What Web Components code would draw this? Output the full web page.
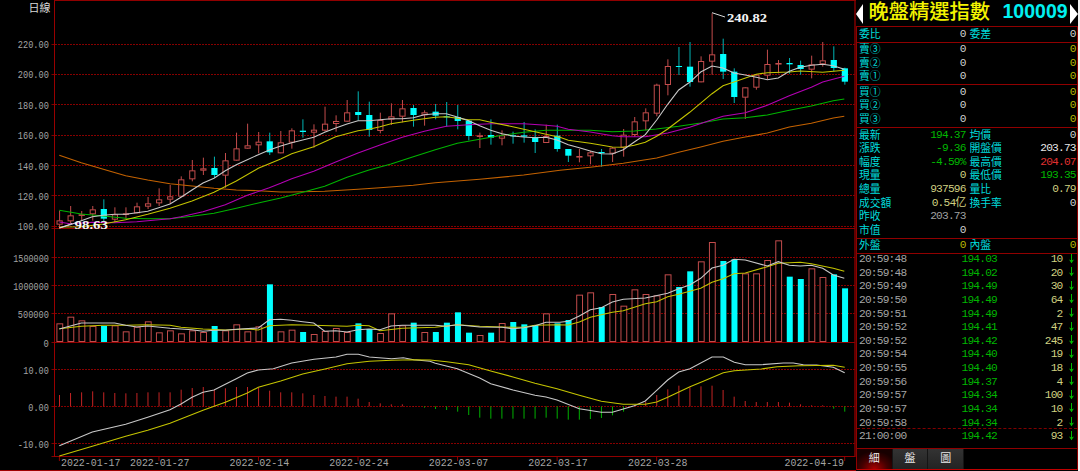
<!DOCTYPE html>
<html lang="zh-Hant">
<head>
<meta charset="utf-8">
<title>晚盤精選指數</title>
<style>
html,body{margin:0;background:#000;overflow:hidden}
body{width:1080px;height:471px}
</style>
</head>
<body>
<trade-screen></trade-screen>
<script>
const MONO = '"Liberation Mono","Noto Sans CJK TC",monospace';
const CJK = '"Liberation Sans","Noto Sans CJK TC",sans-serif';
// Series are stored in thirds of a pixel.
const X = i => 59.4 + 11.06 * i;
const RED = '#c24c4c', CYAN = '#00ffff';

const candles = [
[632,661,674,684,0],[618,646,664,670,0],[633,643,647,662,0],[618,628,643,662,0],[598,627,656,668,1],[622,643,659,667,0],[622,640,645,658,0],[608,619,640,640,0],[591,610,620,627,0],[565,598,610,618,0],[555,589,599,612,0],[529,538,590,590,0],[480,511,538,544,0],[473,505,512,525,0],[470,504,525,533,1],[459,481,527,563,0],[398,445,482,482,0],[371,436,446,446,0],[396,425,436,460,0],[398,424,457,465,1],[393,427,460,460,0],
[385,391,428,446,0],[358,392,396,413,1],[373,389,398,443,0],[320,371,392,395,0],[346,363,372,395,0],[300,337,365,365,0],[274,336,345,362,1],[305,345,390,410,1],[338,360,393,400,0],[310,349,359,375,0],[300,325,350,367,0],[315,324,345,380,1],[331,337,346,377,0],[312,335,347,358,1],[306,349,352,380,1],[315,351,363,388,1],[360,362,408,421,1],[398,406,411,444,0],[358,405,413,434,1],[391,406,416,436,0],[395,406,409,431,1],[366,406,410,428,1],[388,412,426,459,1],[374,408,429,429,0],[374,407,447,455,1],
[447,447,467,486,1],[447,468,471,487,0],[452,457,469,493,0],[447,456,460,500,1],[441,443,461,486,0],[387,404,443,470,0],[351,364,405,411,0],[325,337,364,391,0],[251,254,341,349,0],[178,198,255,286,0],[141,198,200,225,1],[126,200,246,260,1],[169,183,247,247,0],[40,163,185,224,0],[116,162,215,237,1],[205,215,291,309,1],[262,262,293,357,0],[222,224,263,269,0],[149,192,227,238,0],[180,189,192,220,0],[174,189,193,221,1],[182,195,207,224,1],[167,193,209,235,0],[126,181,193,200,0],[139,180,204,214,1],[203,205,245,254,1]];
const volumes = [295,275,286,303,303,301,319,305,289,322,316,325,316,321,303,316,298,319,304,178,319,314,321,327,318,309,321,295,312,324,265,301,293,321,321,293,262,323,330,323,294,291,298,300,265,295,285,209,202,246,207,242,193,207,211,148,186,139,109,51,108,103,145,145,105,46,155,162,130,156,148,190];
const histogram = [165,159,157,154,157,159,160,159,157,157,157,149,144,141,149,145,141,141,143,152,157,157,160,165,168,170,170,176,186,190,193,193,198,203,207,210,215,225,233,236,236,236,236,236,233,236,239,239,237,234,226,215,199,185,165,148,137,142,139,137,150,170,183,186,186,186,188,193,196,196,206,215];

// Joins runs of points, each run with its own origin.
const curve = (color, ...runs) => {
  const pts = runs.map(([dx, dy, s]) => s.split(' ').map(p => {
    const [x, y] = p.split(',').map(Number);
    return ((x + dx) / 3).toFixed(1) + ',' + ((y + dy) / 3).toFixed(1);
  }).join(' ')).join(' ');
  return `<polyline points="${pts}" fill="none" stroke="${color}" stroke-width="1.1"/>`;
};
const rule = (y, dashed) => `<line x1="55" x2="855" y1="${y}" y2="${y}" stroke="${dashed ? '#860000' : '#900000'}" stroke-width="1" ${dashed ? 'stroke-dasharray="2 1"' : ''} shape-rendering="crispEdges"/>` +
  `<line x1="51.5" x2="54" y1="${y}" y2="${y}" stroke="#800000"/>`;
const label = (t, y, w) => `<text x="${48.8 - w}" y="${y + 3.9}" textLength="${w}" lengthAdjust="spacingAndGlyphs">${t}</text>`;
const box = (x, top, bottom, filled, w) => filled
  ? `<rect x="${x - w / 2}" y="${top}" width="${w}" height="${Math.max(1, bottom - top)}" fill="${CYAN}"/>`
  : `<rect x="${x - w / 2 + .5}" y="${top + .5}" width="${w - 1}" height="${Math.max(.6, bottom - top - 1)}" fill="#000" stroke="${RED}"/>`;

class ChartPane extends HTMLElement {
  constructor() { super(); this.attachShadow({mode: 'open'}); }
  paint(top, height, body) {
    this.shadowRoot.innerHTML = `<style>
      :host{display:block;height:${height}px}
      svg{display:block;overflow:visible}
      text{font:11.8px ${MONO};fill:#a4a4a4}
      .peak{font:bold 12px "Liberation Serif",serif;fill:#f4f4f4}
      .name{font:11px ${CJK};fill:#d8d8d8}
    </style><svg width="856" height="${height}" viewBox="0 ${top} 856 ${height}">
      <path d="M54.5 ${top}V${top + height}" stroke="#980000"/><path d="M855 ${top}V${top + height}" stroke="#800000" stroke-width="1.5"/>${body}</svg>`;
  }
}

class PricePane extends ChartPane {
  connectedCallback() {
    const grid = [[220,44.3],[200,74],[180,104.6],[160,135.4],[140,165.7],[120,195.7],[100,226.3]];
    let s = '<path d="M54 .5H856" stroke="#900000"/><text class="name" x="28.5" y="11.5">日線</text>';
    for (const [v, y] of grid) s += rule(Math.floor(y) + .5, true) + label(v + '.00', y, 31);
    s += rule(228.5);
    candles.forEach(([h, t, b, l, c], i) => {
      const x = X(i) + .2;
      s += `<path d="M${x} ${h / 3}V${l / 3}" stroke="${c ? '#00b4b4' : '#c24c4c'}"/>` + box(x, t / 3, b / 3, c, 6.2);
    });
    s += curve('#c46200',[0,0,'178,466 244,488 310,508 377,527 443,540 510,551 576,558 642,565 709,570 775,572 842,576'],[840,180,'35,396 134,394 234,388 300,383 400,376 466,368 599,358 731,345'],[1680,0,'0,511 91,502 190,490 290,474 356,457 422,441 489,424 556,411 622,399 688,381 754,370 820,354 853,349']);
    s += curve('#00b400',[0,0,'178,631 244,642 310,648 377,655 443,656 510,656 576,649 642,640 709,625 775,609 842,594'],[840,180,'68,397 134,379 201,352 267,330 333,312 400,290 466,269 532,250 599,238 666,226 731,217 798,211 840,211'],[1680,0,'25,391 91,391 157,395 223,393 289,387 356,379 422,369 489,357 556,353 622,345 688,331 754,318 820,302 853,297']);
    s += curve('#b400b4',[0,0,'178,666 210,671 277,667 344,668 410,665 476,659 510,656 543,650 609,635 676,614 742,586 808,563 842,550'],[840,180,'35,356 101,334 167,306 234,279 300,255 367,232 433,214 499,199 566,194 632,191 731,191 798,196 831,199'],[1680,0,'25,388 91,396 157,407 190,410 256,410 323,399 389,382 456,359 489,349 556,338 622,316 688,287 754,262 788,246 853,229']);
    s += curve('#c4c400',[0,0,'178,681 244,680 310,672 377,659 443,643 510,625 576,603 642,577 709,543 775,505 842,477'],[840,180,'35,281 101,260 167,230 234,212 267,208 300,200 333,191 400,181 466,172 499,170 532,175 566,179 599,179 632,187 698,200 765,215 831,230'],[1680,0,'0,412 25,421 91,430 157,441 190,442 223,436 256,427 290,409 323,387 389,337 456,281 489,257 522,246 589,223 622,218 688,216 721,213 788,217 853,211']);
    s += curve('#c8c8c8',[0,0,'178,684 211,674 244,662 277,650 310,646 344,643 377,643 410,638 443,634 476,623 510,612 543,592 576,570 609,549 642,535 676,512 709,494 742,479 775,464 808,450 842,438'],[840,180,'35,248 68,240 101,232 134,217 167,204 201,192 234,182 267,182 300,179 333,176 367,176 400,173 433,164 466,161 499,161 532,171 566,182 599,197 632,211 666,221 698,228 731,231 765,233 798,232 831,240'],[1680,0,'25,434 58,443 91,453 124,461 157,462 190,449 223,426 256,404 290,360 323,313 356,270 389,247 422,216 456,198 489,204 522,219 556,225 589,232 622,239 655,234 688,214 721,202 754,196 788,193 820,197 853,208']);
    s += '<path d="M712 12.7L725 17M59.5 228L72 223.5" stroke="#d8d8d8"/><text class="peak" x="727" y="22" textLength="40" lengthAdjust="spacingAndGlyphs">240.82</text><text class="peak" x="74.5" y="229.3" textLength="33.5" lengthAdjust="spacingAndGlyphs">98.63</text>';
    this.paint(0, 229, s);
  }
}

class VolumePane extends ChartPane {
  connectedCallback() {
    let s = rule(257.5, true) + rule(285.5, true) + rule(313.5, true) + rule(342.5)
      + label('1500000', 258, 35.5) + label('1000000', 286, 35.5) + label('500000', 314, 31) + label('0', 343.2, 5.3);
    volumes.forEach((t, i) => { s += box(X(i) + .4, t / 3 + 225, 342, candles[i][4], candles[i][4] ? 6 : 6.8); });
    s += curve('#c4c400',[0,675,'178,311 244,304 310,301 377,301 443,299 510,301 543,307 609,312 676,315 742,312 775,315 808,302 842,301'],[840,675,'35,299 101,301 201,304 234,301 267,302 300,317 367,310 466,307 532,299 599,304 698,307 731,307 765,301 831,299'],[1680,675,'25,300 58,291 91,277 157,262 190,257 256,236 290,230 323,215 356,208 422,190 456,172 489,161 522,146 556,144 622,125 655,115 721,112 754,116 820,130 853,139']);
    s += curve('#c8c8c8',[0,675,'178,312 211,303 244,294 344,294 377,301 410,306 443,303 510,310 576,314 609,319 642,316 676,316 709,313 775,309 808,284 842,283'],[840,675,'35,286 68,290 101,294 134,319 167,317 201,321 234,314 267,312 300,314 333,303 367,301 466,301 499,304 532,299 599,306 666,307 698,311 731,308 765,302 798,292 831,292'],[1680,675,'0,292 25,289 58,273 91,254 124,248 157,231 190,223 256,219 323,205 356,191 389,180 422,160 456,129 489,121 522,103 556,105 622,123 655,110 688,121 721,123 754,121 788,130 820,150 853,160']);
    this.paint(229, 114, s);
  }
}

class MacdPane extends ChartPane {
  connectedCallback() {
    let s = rule(369.5, true) + rule(406.5, true) + rule(443.5, true) + rule(456.5)
      + label('10.00', 369.7, 25.5) + label('0.00', 407, 20.5) + label('-10.00', 443.9, 31);
    histogram.forEach((v, i) => { s += `<path d="M${X(i) + .1} 406.4V${v / 3 + 340}" stroke="${v > 199 ? '#00b000' : '#c42424'}"/>`; });
    s += curve('#c8c8c8',[0,1020,'178,317 277,276 377,253 443,232 510,209 543,192 576,172 609,157 642,150 676,133 709,116 742,99 775,90 820,86 875,69 942,58 1008,51 1041,43 1075,43 1108,51 1175,56 1210,53 1241,59 1290,64'],[1290,1020,'16,70 82,86 149,114 182,131 249,150 315,166 348,171 381,180 448,206 514,217 547,217 613,197 646,183 680,151 713,120 746,96 780,86 846,51 880,51 913,67 946,74 994,74 1060,69 1090,69 1120,74 1160,75 1210,82 1244,98']);
    s += curve('#c4c400',[0,1020,'178,348 277,319 377,289 443,271 510,250 609,211 676,187 742,159 775,142 842,123 908,102 975,87 1041,71 1108,64 1175,61 1241,59 1290,60'],[1290,1020,'50,65 116,74 182,93 249,111 315,130 381,146 448,166 514,184 580,193 646,193 680,186 713,172 780,140 820,124 880,98 913,92 994,87 1041,80 1108,77 1210,76 1244,82']);
    this.paint(343, 114, s);
  }
}

class DateAxis extends HTMLElement {
  connectedCallback() {
    const d = [['2022-01-17',61],['2022-01-27',130],['2022-02-14',229.6],['2022-02-24',329.2],['2022-03-07',428.8],['2022-03-17',528.2],['2022-03-28',628],['2022-04-19',784.5]];
    this.attachShadow({mode: 'open'}).innerHTML = `<style>:host{display:block;height:14px}svg{display:block}text{font:11.8px ${MONO};fill:#a4a4a4}</style>
      <svg width="856" height="14" viewBox="0 457 856 14"><path d="M0 470.5H856" stroke="#a00000"/>${
      [0,9,18,27,36,45,54,71].map(i => `<path d="M${X(i)} 457v4" stroke="#900000"/>`).join('')}${
      d.map(([t, x]) => `<text x="${x}" y="466" textLength="59.5" lengthAdjust="spacingAndGlyphs">${t}</text>`).join('')}</svg>`;
  }
}

class SymbolHeader extends HTMLElement {
  connectedCallback() {
    this.attachShadow({mode: 'open'}).innerHTML = `<style>
      :host{display:flex;height:26px;align-items:center;justify-content:space-between}
      svg{display:block;flex:none;margin-top:1px}
      .n{font:500 20.3px/24px ${CJK};color:#f4f400;white-space:nowrap;margin:-2px 0 0 5px}
      .c{font:bold 19.5px/24px "Liberation Sans",sans-serif;color:#00f0f0;margin:-4px 2px 0 12px}
    </style><svg width="7" height="20"><path d="M7 0V20L0 10Z" fill="#fff"/></svg>
    <span class="n"><slot name="name"></slot></span><span class="c"><slot name="code"></slot></span>
    <svg width="8" height="20"><path d="M0 0V20L8 10Z" fill="#fff"/></svg>`;
  }
}

class QuoteRow extends HTMLElement {
  connectedCallback() {
    const [a, av, ac, b, bv, bc] = this.getAttribute('cells').split('|');
    this.attachShadow({mode: 'open'}).innerHTML = `<style>
      :host{display:grid;grid-template-columns:106.2px 105.8px;column-gap:4.3px;height:13.66px;padding-left:2px;font:10.8px/13.6px ${CJK};white-space:nowrap}
      div{display:flex;justify-content:space-between}
      b{font-weight:400;color:#00dcdc;line-height:15px}
      i{font:normal 11.2px/14px ${MONO};letter-spacing:-.8px;margin-right:-.5px}
    </style><div><b>${a}</b><i style="color:${ac}">${av}</i></div>${b ? `<div><b>${b}</b><i style="color:${bc}">${bv}</i></div>` : ''}`;
  }
}

class TradeTick extends HTMLElement {
  connectedCallback() {
    const [t, p, v] = this.getAttribute('cells').split('|');
    this.attachShadow({mode: 'open'}).innerHTML = `<style>
      :host{display:grid;grid-template-columns:102.5px 36px 65px 12px;height:13.63px;padding-left:2px;font:11.2px/14px ${MONO};letter-spacing:-.8px;color:#a4a4a4}
      .p{color:#00b400}.v{color:#d0d080;text-align:right}
      svg{margin:1.5px 0 0 5.5px}
    </style><span>${t}</span><span class="p">${p}</span><span class="v">${v}</span>
    <svg width="7" height="10"><path d="M3.5 0V9" stroke="#00b800"/><path d="M1 5.4L3.5 6.4L6 5.4L3.5 9.2Z" fill="#00b800"/></svg>`;
  }
}

class InfoBlock extends HTMLElement {
  connectedCallback() {
    this.attachShadow({mode: 'open'}).innerHTML = `<style>
      :host{display:block;box-sizing:border-box;border-top:1px solid #900000;height:${this.getAttribute('h')}px}
      div{margin-top:${this.getAttribute('shift') || 0}px}
    </style><div><slot></slot></div>`;
  }
}

class PanelTabs extends HTMLElement {
  connectedCallback() {
    this.attachShadow({mode: 'open'}).innerHTML = `<style>
      :host{display:flex;box-sizing:border-box;height:22px;border-top:1px solid #900000;border-bottom:1px solid #c00000}
      span{box-sizing:border-box;width:35.7px;border-right:1px solid #151515;background:linear-gradient(#333,#232323);color:#e8e8e8;font:11px/18.5px ${CJK};text-align:center}
      .on{background:radial-gradient(ellipse 22px 18px at 50% 100%,#a80000,#420000 60%,#180000)}
    </style><span class="on">細</span><span>盤</span><span>圖</span>`;
  }
}

class QuotePanel extends HTMLElement {
  connectedCallback() {
    const W = '#d0d0d0', Y = '#b8b800', G = '#00b800', P = '#d0d080';
    const row = (...c) => `<quote-row cells="${c.join('|')}"></quote-row>`;
    const book = names => names.map(n => `<quote-row cells="${n}|0|${W}|&nbsp;|0|${Y}"></quote-row>`).join('');
    const ticks = ['20:59:48|194.03|10','20:59:48|194.02|20','20:59:49|194.49|30','20:59:50|194.49|64','20:59:51|194.49|2','20:59:52|194.41|47','20:59:52|194.42|245','20:59:54|194.40|19','20:59:55|194.40|18','20:59:56|194.37|4','20:59:57|194.34|100','20:59:57|194.34|10','20:59:58|194.34|2','21:00:00|194.42|93'];
    this.attachShadow({mode: 'open'}).innerHTML = `<style>
      :host{display:block;width:222px;height:471px;border-right:2px solid #f4f4f4}
      main{box-sizing:border-box;width:221.5px;height:444px;border:solid #900000;border-width:0 1px}
      .cut{border-top:1px dashed #800000;margin-top:-1px}
    </style><symbol-header><span slot="name">晚盤精選指數</span><span slot="code">100009</span></symbol-header>
    <main>
    <info-block h="16">${row('委比', 0, W, '委差', 0, W)}</info-block>
    <info-block h="42" shift="-1">${book(['賣③','賣②','賣①'])}</info-block>
    <info-block h="43" shift="-.5">${book(['買①','買②','買③'])}</info-block>
    <info-block h="111" shift="-.5">${
      row('最新','194.37',G,'均價',0,W) + row('漲跌','-9.36',G,'開盤價','203.73','#e8e8e8') + row('幅度','-4.59%',G,'最高價','204.07','#e03030') +
      row('現量','0',P,'最低價','193.35',G) + row('總量','937596',P,'量比','0.79',P) + row('成交額','0.54亿',P,'換手率','0',W) +
      row('昨收','203.73','#a0a0a0') + row('市值','0',W)}</info-block>
    <info-block h="15" shift="-.8">${row('外盤', 0, Y, '內盤', 0, Y)}</info-block>
    <info-block h="195" shift="-1.9">${ticks.map((t, i) => `${i === 13 ? '<div class="cut"></div>' : ''}<trade-tick cells="${t}"></trade-tick>`).join('')}</info-block>
    <panel-tabs></panel-tabs>
    </main>`;
  }
}

class TradeScreen extends HTMLElement {
  connectedCallback() {
    this.attachShadow({mode: 'open'}).innerHTML = `<style>
      :host{display:grid;grid-template-columns:856px 224px;width:1080px;height:471px;background:#000;overflow:hidden}
    </style><div><price-pane></price-pane><volume-pane></volume-pane><macd-pane></macd-pane><date-axis></date-axis></div><quote-panel></quote-panel>`;
  }
}

customElements.define('price-pane', PricePane);
customElements.define('volume-pane', VolumePane);
customElements.define('macd-pane', MacdPane);
customElements.define('date-axis', DateAxis);
customElements.define('symbol-header', SymbolHeader);
customElements.define('quote-row', QuoteRow);
customElements.define('trade-tick', TradeTick);
customElements.define('info-block', InfoBlock);
customElements.define('panel-tabs', PanelTabs);
customElements.define('quote-panel', QuotePanel);
customElements.define('trade-screen', TradeScreen);
</script>
</body>
</html>
